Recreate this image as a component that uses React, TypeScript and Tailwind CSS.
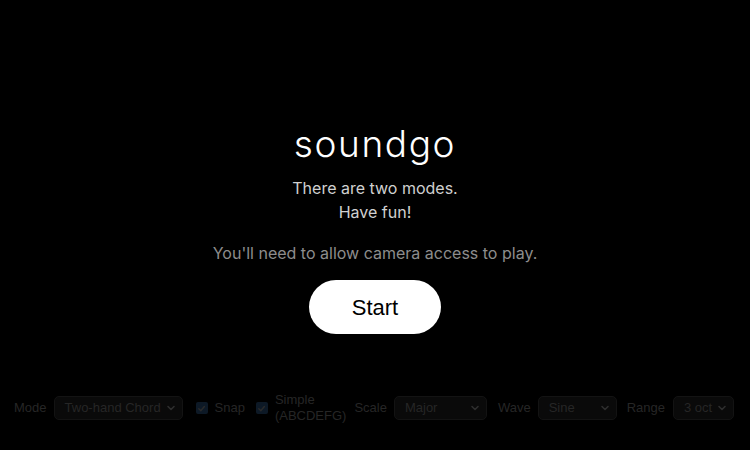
import React from 'react';

// ────────────────────────────────────────────────
// Small pieces of the settings bar
// ────────────────────────────────────────────────

function Select({ value, width }: { value: string; width: string }) {
  return (
    <div
      className={`flex h-[24px] shrink-0 ${width} items-center justify-between whitespace-nowrap rounded-[5px] border border-[#131313] bg-[#0a0a0a] pl-[10px] pr-[6px] text-[13px] text-[#262626]`}
    >
      <span>{value}</span>
      <svg width="10" height="10" viewBox="0 0 10 10" fill="none">
        <path d="M2 3.5 L5 6.5 L8 3.5" stroke="#2e2e2e" strokeWidth="1.6" strokeLinecap="round" strokeLinejoin="round" />
      </svg>
    </div>
  );
}

function Check() {
  return (
    <span className="flex h-[12px] w-[12px] shrink-0 items-center justify-center rounded-[2px] bg-[#0d1926]">
      <svg width="9" height="9" viewBox="0 0 10 10" fill="none">
        <path d="M2 5.2 L4.2 7.4 L8.2 2.8" stroke="#2a2a2a" strokeWidth="1.6" strokeLinecap="round" strokeLinejoin="round" />
      </svg>
    </span>
  );
}

export default function App() {
  return (
    <div
      className="relative flex h-[450px] w-[750px] flex-col items-center bg-black"
      style={{ fontFamily: 'Inter, "Liberation Sans", sans-serif' }}
    >
      {/* Intro */}
      <div className="flex flex-col items-center pt-[122px]">
        <h1 className="text-[37px] font-light leading-[44px] tracking-[1.6px] text-white">soundgo</h1>
        <p className="mt-[10px] text-center text-[16px] leading-[24px] text-[#d0d0d0]">
          There are two modes.
          <br />
          Have fun!
        </p>
        <p className="mt-[17px] text-[16px] leading-[24px] text-[#8d8d8d]">
          You'll need to allow camera access to play.
        </p>
        <button
          className="mt-[15px] flex h-[54px] w-[132px] items-center justify-center rounded-full bg-white text-[22px] text-black"
          style={{ fontFamily: '"Liberation Sans", Arial, sans-serif' }}
        >
          Start
        </button>
      </div>

      {/* Settings bar */}
      <div
        className="absolute left-0 top-[393px] flex h-[30px] w-full items-center gap-[7px] whitespace-nowrap pl-[14px] text-[13px] text-[#262626]"
        style={{ fontFamily: '"Liberation Sans", Arial, sans-serif' }}
      >
        <span>Mode</span>
        <Select value="Two-hand Chord" width="w-[129px]" />
        <label className="ml-[6px] flex items-center gap-[7px]">
          <Check />
          <span>Snap</span>
        </label>
        <label className="ml-[4px] flex items-center gap-[7px]">
          <Check />
          <span className="leading-[16px]">
            Simple
            <br />
            (ABCDEFG)
          </span>
        </label>
        <span className="ml-[1px]">Scale</span>
        <Select value="Major" width="w-[93px]" />
        <span className="ml-[4px]">Wave</span>
        <Select value="Sine" width="w-[79px]" />
        <span className="ml-[3px]">Range</span>
        <div className="ml-[1px]">
          <Select value="3 oct" width="w-[61px]" />
        </div>
      </div>
    </div>
  );
}
